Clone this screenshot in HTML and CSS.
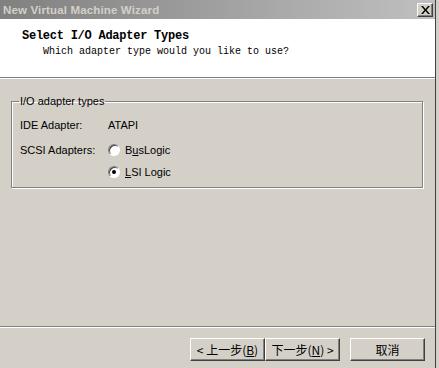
FILE: index.html
```
<!DOCTYPE html>
<html>
<head>
<meta charset="utf-8">
<link rel="stylesheet" href="styles.css">
</head>
<body>
<div class="window">
  <div class="titlebar">
    <span class="title">New Virtual Machine Wizard</span>
    <span class="close"><svg width="9" height="8" viewBox="0 0 9 8"><path d="M0 0h2l2.5 3 2.5-3h2l-3.5 4 3.5 4h-2l-2.5-3-2.5 3h-2l3.5-4z" fill="#000"/></svg></span>
  </div>
  <div class="header">
    <div class="h-title">Select I/O Adapter Types</div>
    <div class="h-sub">Which adapter type would you like to use?</div>
  </div>
  <div class="body">
    <fieldset class="group">
      <legend>I/O adapter types</legend>
      <div class="row">
        <span class="lbl">IDE Adapter:</span>
        <span class="val">ATAPI</span>
      </div>
      <div class="row row-scsi">
        <span class="lbl">SCSI Adapters:</span>
        <span class="val radio-item"><span class="radio"></span><span>B<u>u</u>sLogic</span></span>
      </div>
      <div class="row row-lsi">
        <span class="lbl"></span>
        <span class="val radio-item"><span class="radio checked"><span class="dot"></span></span><span><u>L</u>SI Logic</span></span>
      </div>
    </fieldset>
  </div>
  <div class="sep"></div>
  <div class="buttons">
    <button class="btn">&lt; 上一步(<u>B</u>)</button>
    <button class="btn">下一步(<u>N</u>) &gt;</button>
    <button class="btn cancel">取消</button>
  </div>
</div>
</body>
</html>
```
FILE: styles.css
```
html, body {
  margin: 0;
  padding: 0;
  background: #d4d0c8;
}
body {
  width: 439px;
  height: 368px;
  overflow: hidden;
  font-family: "Liberation Sans", "DejaVu Sans", sans-serif;
  font-size: 11px;
  color: #000;
}
.window {
  width: 435px;
  height: 368px;
  border-right: 1px solid #404040;
  background: #d4d0c8;
  display: flex;
  flex-direction: column;
}
.titlebar {
  height: 19px;
  background: linear-gradient(to right, #808080, #c0c0c0);
  display: flex;
  align-items: center;
  justify-content: space-between;
  padding: 0 1px 0 3px;
  box-sizing: border-box;
}
.title {
  color: #d4d0c8;
  font-weight: bold;
  font-size: 11.5px;
  letter-spacing: 0.15px;
}
.close {
  width: 16px;
  height: 14px;
  background: #d4d0c8;
  box-sizing: border-box;
  border-top: 1px solid #fff;
  border-left: 1px solid #fff;
  border-right: 1px solid #404040;
  border-bottom: 1px solid #404040;
  box-shadow: inset -1px -1px 0 #808080;
  display: flex;
  align-items: center;
  justify-content: center;
  margin-right: 1px;
}
.header {
  height: 59px;
  background: #fff;
  border-bottom: 1px solid #808080;
  box-shadow: 0 1px 0 #fff;
  padding: 10px 0 0 22px;
  box-sizing: border-box;
  font-family: "Liberation Mono", monospace;
}
.h-title {
  font-weight: bold;
  font-size: 12px;
  letter-spacing: -0.25px;
  line-height: 14px;
}
.h-sub {
  font-size: 10px;
  line-height: 14px;
  margin-top: 2px;
  padding-left: 21px;
}
.body {
  flex: 1;
  padding: 17px 0 0 11px;
}
.group {
  margin: 0;
  width: 412px;
  height: 93px;
  box-sizing: border-box;
  border: 1px solid #808080;
  box-shadow: 1px 1px 0 #fff, inset 1px 1px 0 #fff;
  padding: 11px 0 0 8px;
  position: relative;
}
.group legend {
  padding: 0 1px;
  margin-left: -1px;
  line-height: 12px;
  font-size: 11px;
}
.row {
  display: flex;
  align-items: center;
  height: 14px;
}
.row-scsi { margin-top: 11px; }
.row-lsi { margin-top: 8px; }
.lbl {
  width: 88px;
}
.radio-item {
  display: flex;
  align-items: center;
  gap: 5px;
}
.radio {
  width: 12px;
  height: 12px;
  border-radius: 50%;
  box-sizing: border-box;
  background: #fff;
  border: 1px solid;
  border-color: #808080 #fff #fff #808080;
  box-shadow: inset 1px 1px 0 #404040;
  display: flex;
  align-items: center;
  justify-content: center;
}
.dot {
  width: 4px;
  height: 4px;
  border-radius: 50%;
  background: #000;
}
.sep {
  height: 1px;
  background: #808080;
  border-bottom: 1px solid #fff;
  margin-bottom: 10px;
}
.buttons {
  display: flex;
  padding: 0 0 7px 190px;
  height: 23px;
}
.btn {
  width: 75px;
  height: 23px;
  margin: 0;
  padding: 0;
  background: #d4d0c8;
  border-top: 1px solid #fff;
  border-left: 1px solid #fff;
  border-right: 1px solid #404040;
  border-bottom: 1px solid #404040;
  box-shadow: inset -1px -1px 0 #808080;
  font-family: "Noto Sans CJK SC", sans-serif;
  font-size: 12px;
  line-height: 20px;
  color: #000;
}
.cancel { margin-left: 10px; }
```
